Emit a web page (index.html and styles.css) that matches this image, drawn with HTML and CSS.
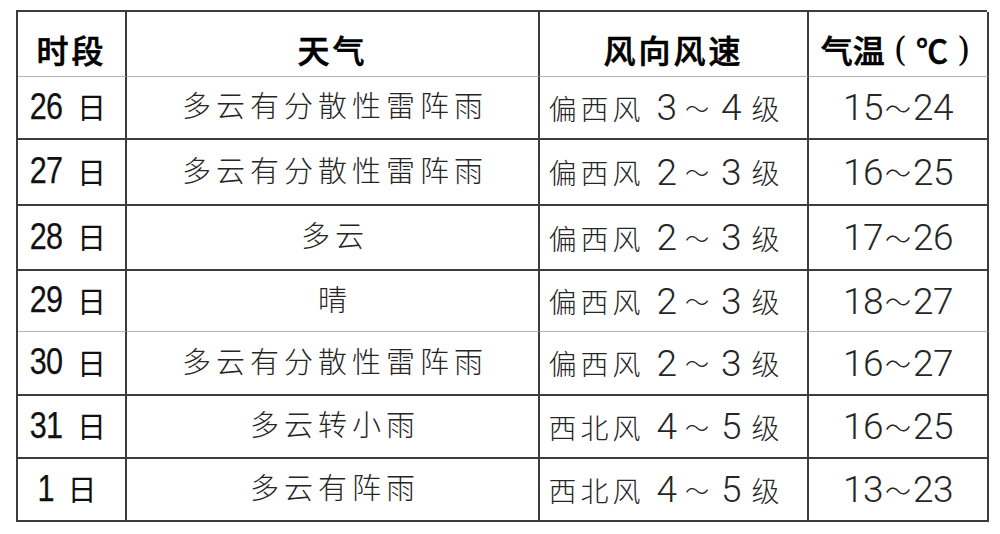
FILE: index.html
```html
<!DOCTYPE html>
<html lang="zh-CN">
<head>
<meta charset="utf-8">
<title>天气预报</title>
<link rel="stylesheet" href="styles.css">
</head>
<body>
<div class="table">
  <div class="cell head c1">时段</div>
  <div class="cell head c2">天气</div>
  <div class="cell head c3">风向风速</div>
  <div class="cell head c4 temp-head">气温<span class="p">(</span>℃<span class="p">)</span></div>

  <div class="cell day"><span class="d">26</span>日</div>
  <div class="cell wx">多云有分散性雷阵雨</div>
  <div class="cell wind">偏西风<span class="n">3</span><span class="t">～</span><span class="n">4</span>级</div>
  <div class="cell temp"><span class="n">15</span><span class="t">～</span><span class="n">24</span></div>

  <div class="cell day"><span class="d">27</span>日</div>
  <div class="cell wx">多云有分散性雷阵雨</div>
  <div class="cell wind">偏西风<span class="n">2</span><span class="t">～</span><span class="n">3</span>级</div>
  <div class="cell temp"><span class="n">16</span><span class="t">～</span><span class="n">25</span></div>

  <div class="cell day"><span class="d">28</span>日</div>
  <div class="cell wx">多云</div>
  <div class="cell wind">偏西风<span class="n">2</span><span class="t">～</span><span class="n">3</span>级</div>
  <div class="cell temp"><span class="n">17</span><span class="t">～</span><span class="n">26</span></div>

  <div class="cell day light"><span class="d">29</span>日</div>
  <div class="cell wx light">晴</div>
  <div class="cell wind light">偏西风<span class="n">2</span><span class="t">～</span><span class="n">3</span>级</div>
  <div class="cell temp light"><span class="n">18</span><span class="t">～</span><span class="n">27</span></div>

  <div class="cell day"><span class="d">30</span>日</div>
  <div class="cell wx">多云有分散性雷阵雨</div>
  <div class="cell wind">偏西风<span class="n">2</span><span class="t">～</span><span class="n">3</span>级</div>
  <div class="cell temp"><span class="n">16</span><span class="t">～</span><span class="n">27</span></div>

  <div class="cell day"><span class="d">31</span>日</div>
  <div class="cell wx">多云转小雨</div>
  <div class="cell wind">西北风<span class="n">4</span><span class="t">～</span><span class="n">5</span>级</div>
  <div class="cell temp"><span class="n">16</span><span class="t">～</span><span class="n">25</span></div>

  <div class="cell day"><span class="d">1</span>日</div>
  <div class="cell wx">多云有阵雨</div>
  <div class="cell wind">西北风<span class="n">4</span><span class="t">～</span><span class="n">5</span>级</div>
  <div class="cell temp"><span class="n">13</span><span class="t">～</span><span class="n">23</span></div>
</div>
</body>
</html>
```

FILE: styles.css
```css
html, body {
  margin: 0;
  padding: 0;
  background: #ffffff;
}

body {
  padding: 10px 0 0 16px;
  font-family: "Noto Sans CJK SC", "Liberation Sans", sans-serif;
  color: #111;
}

.table {
  display: grid;
  width: 971px;
  grid-template-columns: 109px 413px 269px 180px;
  grid-template-rows: 65px 63px 66px 65px 61px 64px 63px 63px;
  border-top: 2px solid #3c3c3c;
  border-left: 2px solid #3c3c3c;
  box-sizing: border-box;
}

.cell {
  box-sizing: border-box;
  border-right: 2px solid #3c3c3c;
  border-bottom: 2px solid #3c3c3c;
  display: flex;
  align-items: center;
  justify-content: center;
  white-space: nowrap;
  line-height: 1;
}

.cell.head,
.cell.light {
  border-bottom: 1px solid #b4b4b4;
}

.head {
  font-size: 32px;
  font-weight: 500;
  letter-spacing: 3px;
  padding-top: 10px;
  color: #000;
  -webkit-text-stroke: 0.6px #000;
}

.temp-head {
  letter-spacing: 0;
  padding-left: 4px;
}

.temp-head .p {
  font-family: "DejaVu Serif", serif;
  font-weight: 400;
  font-size: 34px;
  margin: 0 9px;
  -webkit-text-stroke: 0;
}

.day {
  font-size: 29px;
  font-weight: 400;
  padding-right: 6px;
  padding-bottom: 2px;
}

.day .d {
  font-family: "Liberation Sans", sans-serif;
  font-size: 36px;
  display: inline-block;
  transform: scaleX(0.85);
  margin: 0 12px 0 -4px;
  letter-spacing: -1px;
  -webkit-text-stroke: 0.25px #111;
}

.wx {
  font-size: 29px;
  font-weight: 300;
  letter-spacing: 5px;
  padding-left: 5px;
  padding-bottom: 6px;
  color: #262626;
}

.wind {
  font-size: 28px;
  font-weight: 300;
  letter-spacing: 4px;
  padding-right: 15px;
  color: #262626;
}

.wind .n {
  font-family: Roboto, "Liberation Sans", sans-serif;
  font-size: 37px;
  font-weight: 300;
  margin: 0 10px 0 12px;
  letter-spacing: 0;
}

.wind .t {
  font-size: 24px;
  letter-spacing: 0;
  margin-left: -2px;
}

.temp {
  font-size: 26px;
  font-weight: 300;
  color: #262626;
}

.temp .n {
  font-family: Roboto, "Liberation Sans", sans-serif;
  font-size: 37px;
  font-weight: 300;
  letter-spacing: -0.5px;
}

.temp .t {
  margin: 0 2px;
}
```
